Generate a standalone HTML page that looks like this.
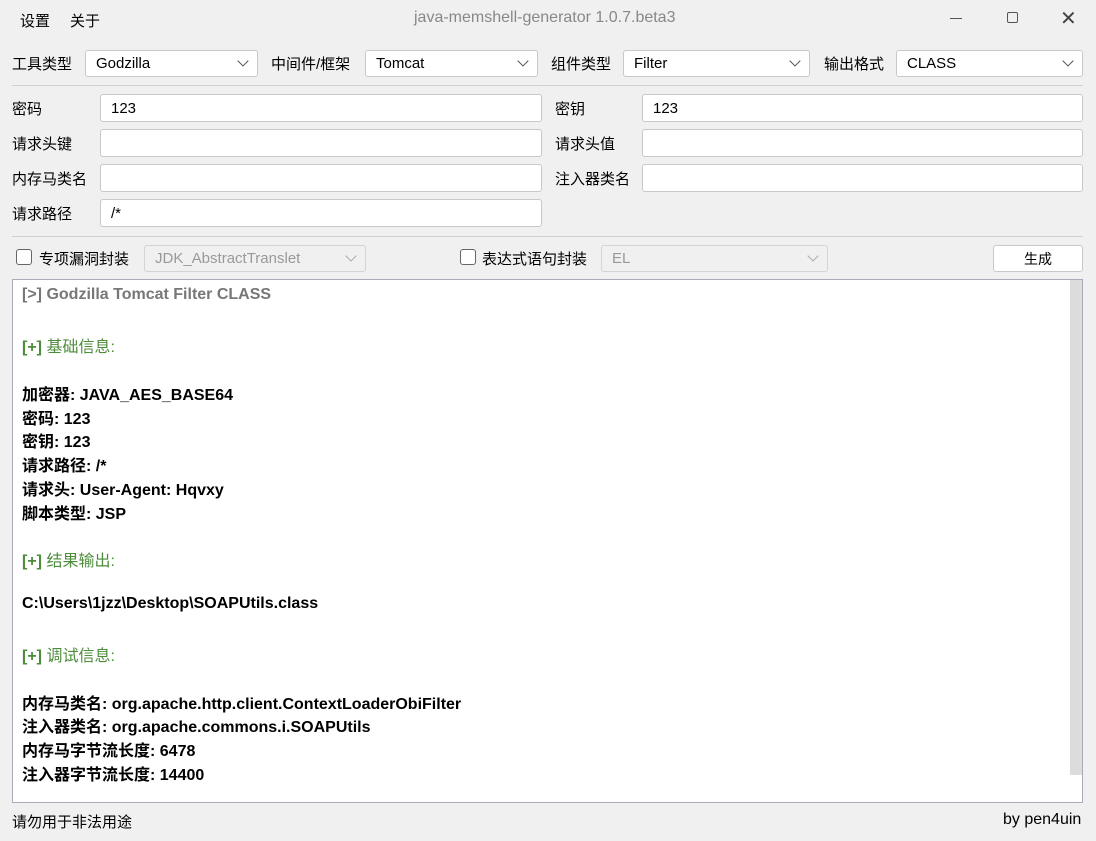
<!DOCTYPE html><html><head><meta charset="utf-8"><style>
*{box-sizing:border-box;margin:0;padding:0}
body{width:1096px;height:841px;background:#f0f0f0;font-family:"Liberation Sans","Microsoft YaHei","Noto Sans CJK SC",sans-serif;font-size:15px;color:#000;position:relative;overflow:hidden}
.a{position:absolute;white-space:nowrap}
.box{position:absolute;background:#fff;border:1px solid #c8c8c8;border-radius:3px;padding-left:10px;display:flex;align-items:center;font-size:15px}
.sel::after{content:"";position:absolute;right:10px;top:6px;width:7px;height:7px;border-right:1.2px solid #555;border-bottom:1.2px solid #555;transform:rotate(45deg)}
.dis{background:#f0f0f0;color:#999;border-color:#d4d4d4}
.dis::after{border-color:#aaa}
.cb{position:absolute;width:16px;height:16px;border:1px solid #666;border-radius:3px;background:#fff}
.out{position:absolute;left:12px;top:279px;width:1071px;height:524px;background:#fff;border:1px solid #aab;}
.out div{position:absolute;left:9px;font-weight:bold;font-size:16px;white-space:nowrap}
.g{color:#4c8c3a}
</style></head><body>
<div class="a" style="left:20px;top:10px">设置</div>
<div class="a" style="left:70px;top:10px">关于</div>
<div class="a" style="left:414px;top:9px;color:#888;font-size:16px">java-memshell-generator 1.0.7.beta3</div>
<div class="a" style="left:950px;top:18px;width:12px;height:1px;background:#555"></div>
<div class="a" style="left:1007px;top:12px;width:11px;height:11px;border:1px solid #555;border-radius:2px"></div>
<div class="a" style="left:1060px;top:6px;font-size:20px;color:#444">✕</div>

<div class="a" style="left:12px;top:53px">工具类型</div>
<div class="box sel" style="left:85px;top:50px;width:173px;height:27px">Godzilla</div>
<div class="a" style="left:271px;top:53px">中间件/框架</div>
<div class="box sel" style="left:365px;top:50px;width:173px;height:27px">Tomcat</div>
<div class="a" style="left:551px;top:53px">组件类型</div>
<div class="box sel" style="left:623px;top:50px;width:187px;height:27px">Filter</div>
<div class="a" style="left:824px;top:53px">输出格式</div>
<div class="box sel" style="left:896px;top:50px;width:187px;height:27px">CLASS</div>
<div class="a" style="left:12px;top:85px;width:1071px;height:1px;background:#d0d0d0"></div>

<div class="a" style="left:12px;top:98px">密码</div>
<div class="box" style="left:100px;top:94px;width:442px;height:28px">123</div>
<div class="a" style="left:555px;top:98px">密钥</div>
<div class="box" style="left:642px;top:94px;width:441px;height:28px">123</div>
<div class="a" style="left:12px;top:133px">请求头键</div>
<div class="box" style="left:100px;top:129px;width:442px;height:28px"></div>
<div class="a" style="left:555px;top:133px">请求头值</div>
<div class="box" style="left:642px;top:129px;width:441px;height:28px"></div>
<div class="a" style="left:12px;top:168px">内存马类名</div>
<div class="box" style="left:100px;top:164px;width:442px;height:28px"></div>
<div class="a" style="left:555px;top:168px">注入器类名</div>
<div class="box" style="left:642px;top:164px;width:441px;height:28px"></div>
<div class="a" style="left:12px;top:203px">请求路径</div>
<div class="box" style="left:100px;top:199px;width:442px;height:28px">/*</div>
<div class="a" style="left:12px;top:236px;width:1071px;height:1px;background:#d0d0d0"></div>

<div class="cb" style="left:16px;top:249px"></div>
<div class="a" style="left:39px;top:248px">专项漏洞封装</div>
<div class="box sel dis" style="left:144px;top:245px;width:222px;height:27px">JDK_AbstractTranslet</div>
<div class="cb" style="left:460px;top:249px"></div>
<div class="a" style="left:482px;top:248px">表达式语句封装</div>
<div class="box sel dis" style="left:601px;top:245px;width:227px;height:27px">EL</div>
<div class="box" style="left:993px;top:245px;width:90px;height:27px;justify-content:center;padding:0;font-size:14px">生成</div>

<div class="out">
<div style="top:6px;color:#777">[&gt;] Godzilla Tomcat Filter CLASS</div>
<div class="g" style="top:53px">[+] <span style="font-weight:normal">基础信息:</span></div>
<div style="top:101px">加密器: JAVA_AES_BASE64</div>
<div style="top:125px">密码: 123</div>
<div style="top:148px">密钥: 123</div>
<div style="top:172px">请求路径: /*</div>
<div style="top:196px">请求头: User-Agent: Hqvxy</div>
<div style="top:220px">脚本类型: JSP</div>
<div class="g" style="top:267px">[+] <span style="font-weight:normal">结果输出:</span></div>
<div style="top:315px">C:\Users\1jzz\Desktop\SOAPUtils.class</div>
<div class="g" style="top:362px">[+] <span style="font-weight:normal">调试信息:</span></div>
<div style="top:410px">内存马类名: org.apache.http.client.ContextLoaderObiFilter</div>
<div style="top:433px">注入器类名: org.apache.commons.i.SOAPUtils</div>
<div style="top:457px">内存马字节流长度: 6478</div>
<div style="top:481px">注入器字节流长度: 14400</div>
<div style="left:1057px;top:0;width:12px;height:495px;background:#dcdcdc"></div>
</div>
<div class="a" style="left:12px;top:811px">请勿用于非法用途</div>
<div class="a" style="left:1003px;top:811px;font-size:16px">by pen4uin</div>
</body></html>
